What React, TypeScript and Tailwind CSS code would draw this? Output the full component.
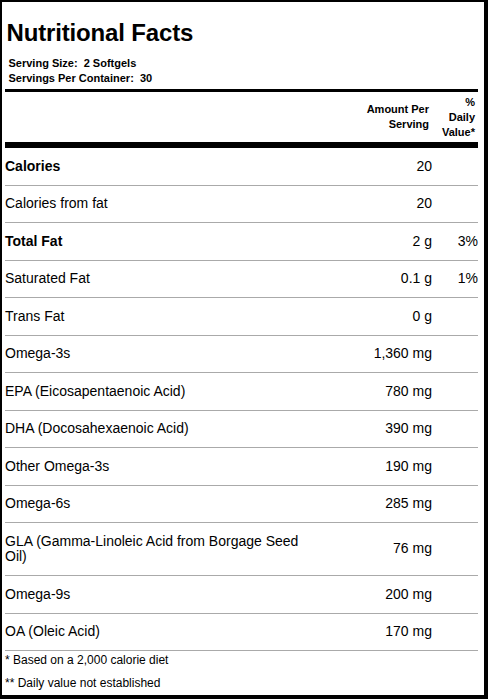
type Row = {
  label: string;
  amount: string;
  dv?: string;
  bold?: boolean;
};

const rows: Row[] = [
  { label: "Calories", amount: "20", bold: true },
  { label: "Calories from fat", amount: "20" },
  { label: "Total Fat", amount: "2 g", dv: "3%", bold: true },
  { label: "Saturated Fat", amount: "0.1 g", dv: "1%" },
  { label: "Trans Fat", amount: "0 g" },
  { label: "Omega-3s", amount: "1,360 mg" },
  { label: "EPA (Eicosapentaenoic Acid)", amount: "780 mg" },
  { label: "DHA (Docosahexaenoic Acid)", amount: "390 mg" },
  { label: "Other Omega-3s", amount: "190 mg" },
  { label: "Omega-6s", amount: "285 mg" },
  { label: "GLA (Gamma-Linoleic Acid from Borgage Seed Oil)", amount: "76 mg" },
  { label: "Omega-9s", amount: "200 mg" },
  { label: "OA (Oleic Acid)", amount: "170 mg" },
];

const App = () => {
  return (
    <div className="box-border flex h-[699px] w-[488px] flex-col overflow-hidden border-t-2 border-r-4 border-b-4 border-l-2 border-black bg-white pt-[17px] pr-[6px] pl-[3px] font-['Liberation_Sans',Arial,sans-serif] text-black">
      <div className="border-b-[3px] border-black pb-[3px]">
        <h1 className="pl-[1.5px] text-[24px] leading-[28px] font-bold tracking-[-0.15px]">
          Nutritional Facts
        </h1>
        <div className="mt-[9px] pl-[3.5px] text-[11px] leading-[15px] font-bold whitespace-pre">
          <p>Serving Size:  2 Softgels</p>
          <p>Servings Per Container:  30</p>
        </div>
      </div>

      <div className="flex h-[56px] items-center border-b-[6px] border-black text-[11px] leading-[15px] font-bold">
        <div className="flex-1" />
        <div className="w-[120px] pr-[3px] text-right">
          <p>Amount Per</p>
          <p>Serving</p>
        </div>
        <div className="w-[46px] pr-[3px] text-right">
          <p>%</p>
          <p>Daily</p>
          <p>Value*</p>
        </div>
      </div>

      {rows.map((row) => (
        <div
          key={row.label}
          className="flex items-center border-b border-[#aaaaaa] py-[10.5px] text-[14px] leading-[15.5px]"
        >
          <div className={`flex-1 pr-[6px] ${row.bold ? "font-bold" : ""}`}>
            {row.label}
          </div>
          <div className="w-[120px] text-right">{row.amount}</div>
          <div className="w-[46px] text-right">{row.dv ?? ""}</div>
        </div>
      ))}

      <div className="flex flex-col gap-[8.5px] pt-[2px] text-[12px] leading-[14px]">
        <p>* Based on a 2,000 calorie diet</p>
        <p>** Daily value not established</p>
      </div>
    </div>
  );
};

export default App;
